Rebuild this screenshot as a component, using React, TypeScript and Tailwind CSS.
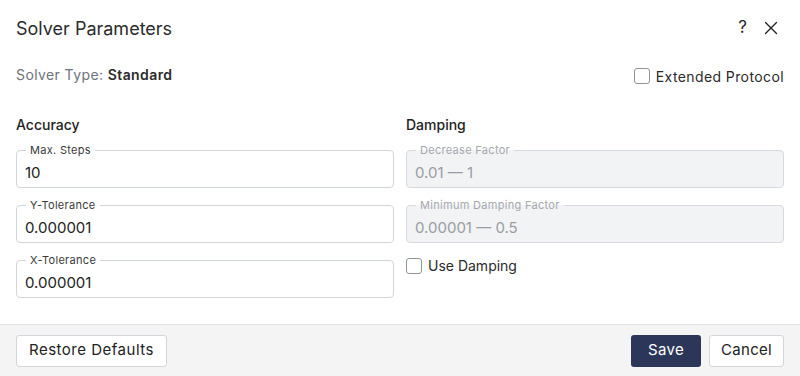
import React from "react";

function Field({ label, value, disabled }: { label: string; value: React.ReactNode; disabled?: boolean }) {
  return (
    <div
      className={`relative h-[38px] rounded-[4px] border flex items-center px-[8px] ${
        disabled ? "bg-[#f2f3f5] border-[#d6d9dd] text-[#9a9da3]" : "bg-white border-[#d2d5da] text-[#222]"
      }`}
    >
      <span
        className={`absolute left-[9px] top-[-8px] px-[4px] text-[11px] leading-[14px] tracking-[0.3px] rounded-[6px] ${
          disabled ? "text-[#a4a8ae] bg-[linear-gradient(to_bottom,#ffffff_50%,#f2f3f5_50%)]" : "text-[#3a3a3a] bg-white"
        }`}
      >
        {label}
      </span>
      <span className="text-[15px] leading-none mt-[6px]">{value}</span>
    </div>
  );
}

function Check({ label, track }: { label: string; track?: boolean }) {
  return (
    <label className={`flex items-center gap-[6px] text-[14px] text-[#2a2a2a] ${track ? "tracking-[0.4px]" : ""}`}>
      <span className="w-[16px] h-[16px] rounded-[3px] border border-[#8f949b] bg-white" />
      <span>{label}</span>
    </label>
  );
}

export default function App() {
  return (
    <div
      className="w-[800px] h-[376px] bg-white flex flex-col"
      style={{ fontFamily: "Inter, 'Noto Sans', sans-serif" }}
    >
      <div className="h-[56px] flex items-center justify-between px-4 shrink-0">
        <div className="text-[18px] text-[#2b2b2b]">Solver Parameters</div>
        <div className="flex items-center gap-[17px] text-[#222] mr-[6px]">
          <span className="text-[17px]">?</span>
          <svg width="14" height="14" viewBox="0 0 14 14">
            <path d="M1.5 1.5 L12.5 12.5 M12.5 1.5 L1.5 12.5" stroke="#222" strokeWidth="1.4" strokeLinecap="round" />
          </svg>
        </div>
      </div>
      <div className="flex-1 px-4">
        <div className="flex items-center justify-between mt-[8px] h-[20px]">
          <div className="text-[14px] text-[#6f737a] tracking-[0.4px]">
            Solver Type: <span className="font-semibold text-[#2b2b2b]">Standard</span>
          </div>
          <div className="mt-[4px]">
            <Check label="Extended Protocol" track />
          </div>
        </div>
        <div className="grid grid-cols-2 gap-x-[12px] mt-[30px]">
          <div className="flex flex-col">
            <div className="h-[20px] flex items-center text-[14px] font-medium text-[#222]">Accuracy</div>
            <div className="flex flex-col gap-[17px] mt-[16px]">
              <Field label="Max. Steps" value="10" />
              <Field label="Y-Tolerance" value="0.000001" />
              <Field label="X-Tolerance" value="0.000001" />
            </div>
          </div>
          <div className="flex flex-col">
            <div className="h-[20px] flex items-center text-[14px] font-medium text-[#222]">Damping</div>
            <div className="flex flex-col gap-[17px] mt-[16px]">
              <Field label="Decrease Factor" value="0.01 — 1" disabled />
              <Field label="Minimum Damping Factor" value="0.00001 — 0.5" disabled />
              <div className="-mt-[5px]">
                <Check label="Use Damping" />
              </div>
            </div>
          </div>
        </div>
      </div>
      <div className="h-[52px] shrink-0 border-t border-[#e2e3e5] bg-[#f4f4f4] flex items-center justify-between px-4">
        <button className="h-[32px] px-[12px] rounded-[3px] border border-[#d4d6da] bg-white text-[15px] tracking-[0.5px] text-[#222]">
          Restore Defaults
        </button>
        <div className="flex items-center gap-[8px]">
          <button className="h-[32px] w-[70px] rounded-[3px] bg-[#2c3658] text-white text-[15px] tracking-[0.3px]">
            Save
          </button>
          <button className="h-[32px] w-[75px] rounded-[3px] border border-[#d4d6da] bg-white text-[15px] tracking-[0.3px] text-[#222]">
            Cancel
          </button>
        </div>
      </div>
    </div>
  );
}
